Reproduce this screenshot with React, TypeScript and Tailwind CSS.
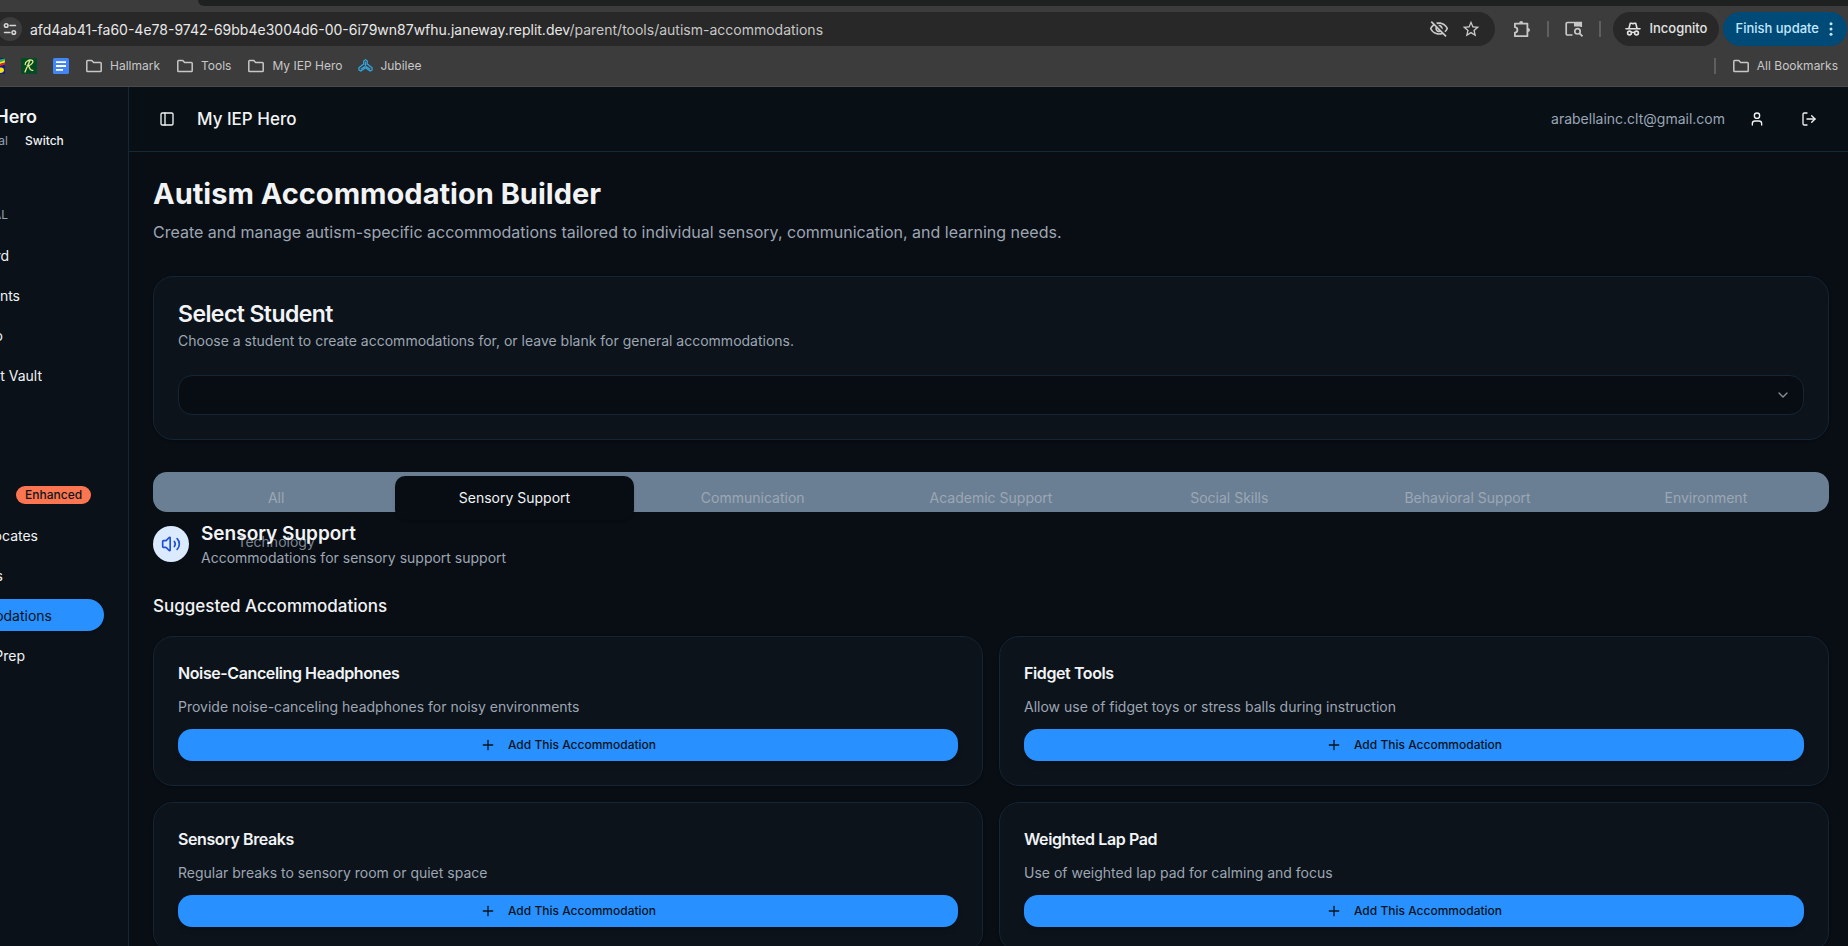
import type { ReactNode } from "react";
import { ChevronDown, LogOut, PanelLeft, Plus, User, Volume2 } from "lucide-react";
import { MdOutlineVisibilityOff, MdStarBorder } from "react-icons/md";

const categories = [
  "All",
  "Sensory Support",
  "Communication",
  "Academic Support",
  "Social Skills",
  "Behavioral Support",
  "Environment",
  "Technology",
];

const suggestions = [
  { title: "Noise-Canceling Headphones", text: "Provide noise-canceling headphones for noisy environments" },
  { title: "Fidget Tools", text: "Allow use of fidget toys or stress balls during instruction" },
  { title: "Sensory Breaks", text: "Regular breaks to sensory room or quiet space" },
  { title: "Weighted Lap Pad", text: "Use of weighted lap pad for calming and focus" },
];

function SiteInfoIcon() {
  return (
    <svg width="14" height="14" viewBox="0 0 14 14" fill="none" stroke="#d6d6d6" strokeWidth="1.5">
      <circle cx="3.2" cy="3.5" r="1.8" />
      <path d="M7 3.5h5.5M1.5 10.5H7" strokeLinecap="round" />
      <circle cx="10.8" cy="10.5" r="1.8" />
    </svg>
  );
}

function FolderIcon() {
  return (
    <svg width="18" height="16" viewBox="0 0 18 16" fill="none" stroke="#c7c7c7" strokeWidth="1.5" strokeLinejoin="round">
      <path d="M1.8 3.4a.8.8 0 0 1 .8-.8H6.800L8.600 4.500H15.400a.8.8 0 0 1 .8.8V12.800a.8.8 0 0 1-.8.8H2.600a.8.8 0 0 1-.8-.8z" />
    </svg>
  );
}

function ExtensionIcon() {
  return (
    <svg width="18" height="18" viewBox="0 0 18 18" fill="none">
      <path
        d="M1.900 3.600H14.400V16.200H1.900V12.600C3.400 12.400 4.400 11.300 4.400 9.900C4.400 8.500 3.400 7.400 1.900 7.200Z"
        stroke="#c7c7c7"
        strokeWidth="1.8"
        strokeLinejoin="round"
      />
      <path d="M6.200 3.200a2 2.200 0 0 1 4 0zM14.800 7.900a2.200 2 0 0 1 0 4z" fill="#c7c7c7" />
    </svg>
  );
}

function TabSearchIcon() {
  return (
    <svg width="18" height="16" viewBox="0 0 18 16" fill="none" stroke="#c7c7c7" strokeWidth="1.700">
      <path d="M7.500 14H2.500a1.300 1.300 0 0 1-1.300-1.300V2.800a1.300 1.300 0 0 1 1.300-1.300H16.200V6" />
      <path d="M9 1h7.800v4.500H9z" fill="#c7c7c7" stroke="none" />
      <circle cx="12.500" cy="10.300" r="2.700" />
      <path d="M14.500 12.300l3 3" />
    </svg>
  );
}

function IncognitoIcon() {
  return (
    <svg width="16" height="16" viewBox="0 0 16 16" fill="none" stroke="#e3e3e3" strokeWidth="1.600">
      <path d="M1 7.800h14" strokeLinecap="round" />
      <path d="M4 7.300L5.300 2.200H6.600L8 2.800L9.400 2.200H10.700L12 7.300" strokeLinejoin="round" />
      <circle cx="4.500" cy="12" r="1.900" />
      <circle cx="11.500" cy="12" r="1.900" />
      <path d="M6.400 11.600q1.600-.8 3.200 0" />
    </svg>
  );
}

function RainbowIcon() {
  return (
    <svg width="5" height="16" viewBox="0 0 5 16">
      <path fill="#171b8c" d="M0 0h5v16H0z" />
      <path fill="#2bb24c" d="M0 1.500L5 .5V3L0 4z" />
      <path fill="#f6e51d" d="M0 4L5 2.600V4.500L0 6z" />
      <path fill="#e3281f" d="M0 6L5 4.500V6.500L0 8z" />
      <path fill="#f4e40c" d="M0 9.500Q4 9 4 12T0 15z" />
    </svg>
  );
}

function ScriptRIcon() {
  return (
    <svg width="16" height="16" viewBox="0 0 16 16" fill="none">
      <path fill="#064a25" d="M0 0h16v16H0z" />
      <path
        d="M4.200 6.500C4 3.500 8 1.600 10.700 2.100C13.300 2.700 11.500 6.800 7.200 7.800C9 8.500 8.400 13.500 11.800 12.300M8.800 2.800C7.500 6 5.500 10 4 14"
        stroke="#dff08a"
        strokeWidth="1.300"
        strokeLinecap="round"
      />
    </svg>
  );
}

function DocsIcon() {
  return (
    <svg width="16" height="16" viewBox="0 0 16 16">
      <rect width="16" height="16" rx="1.500" fill="#4285f4" />
      <path d="M3 3.200h10v1.800H3zM3 7.100h10v1.800H3zM3 11h7v1.800H3z" fill="#fff" />
    </svg>
  );
}

function JubileeIcon() {
  return (
    <svg width="15" height="16" viewBox="0 0 16 16" fill="none" stroke="#35a7e0" strokeWidth="1.300" strokeLinejoin="round">
      <path d="M6.100 6.800V2.600L8 1.200L9.900 2.600V6.800M8 3.500V8.600" />
      <path d="M5.600 6.200L1 9.800V12.200L3 13.400L7.400 10.400V8.800M3 11.400L7.400 8.600" />
      <path d="M10.400 6.200L15 9.800V12.200L13 13.400L8.600 10.400V8.800M13 11.400L8.600 8.600" />
    </svg>
  );
}

function Bookmark({ icon, children }: { icon: ReactNode; children?: ReactNode }) {
  return (
    <a href="#" className="flex shrink-0 items-center gap-[7px]">
      {icon}
      {children}
    </a>
  );
}

function BrowserChrome() {
  return (
    <div className="shrink-0 border-b border-[#4a4a4a] bg-[#3c3c3c] text-[#c7c7c7]">
      <div className="flex h-1.5">
        <div className="ml-[198px] grow rounded-bl-lg bg-[#1f2120]" />
      </div>
      <div className="flex h-[46px] items-center pr-px">
        <div className="flex h-[34px] grow items-center rounded-r-full bg-[#282828] pr-[14px]">
          <button aria-label="View site information" className="-ml-[2px] flex size-6 items-center justify-center rounded-full bg-[#3c3c3c]">
            <SiteInfoIcon />
          </button>
          <span className="ml-2 grow text-[14px] text-[#e8e8e8]">
            afd4ab41-fa60-4e78-9742-69bb4e3004d6-00-6i79wn87wfhu.janeway.replit.dev
            <span className="text-[#c7c7c7]">/parent/tools/autism-accommodations</span>
          </span>
          <button aria-label="Third-party cookies blocked" className="mr-3">
            <MdOutlineVisibilityOff size={20} />
          </button>
          <button aria-label="Bookmark this tab">
            <MdStarBorder size={20} />
          </button>
        </div>
        <button aria-label="Extensions" className="ml-[18px]">
          <ExtensionIcon />
        </button>
        <div className="ml-4 h-4 w-0.5 bg-[#5f5f5f]" />
        <button aria-label="Search tabs" className="ml-4">
          <TabSearchIcon />
        </button>
        <div className="ml-4 h-4 w-0.5 bg-[#5f5f5f]" />
        <div className="ml-3 flex h-[34px] items-center gap-2 rounded-full bg-[#282828] px-3 text-[13px] font-medium text-[#e3e3e3]">
          <IncognitoIcon />
          Incognito
        </div>
        <button className="ml-1 flex h-[34px] items-center gap-2 rounded-full bg-[#004a77] px-3 text-[13px] font-medium text-[#c2e7ff]">
          Finish update
          <svg width="8" height="16" viewBox="0 0 8 16" fill="#c2e7ff">
            <circle cx="4" cy="2.700" r="1.500" />
            <circle cx="4" cy="8" r="1.500" />
            <circle cx="4" cy="13.300" r="1.500" />
          </svg>
        </button>
      </div>
      <div className="flex h-[34px] items-start gap-4 pt-1.5 pr-2.5 text-[12px] leading-4">
        <Bookmark icon={<RainbowIcon />} />
        <Bookmark icon={<ScriptRIcon />} />
        <Bookmark icon={<DocsIcon />} />
        <Bookmark icon={<FolderIcon />}>Hallmark</Bookmark>
        <Bookmark icon={<FolderIcon />}>Tools</Bookmark>
        <Bookmark icon={<FolderIcon />}>My IEP Hero</Bookmark>
        <Bookmark icon={<JubileeIcon />}>Jubilee</Bookmark>
        <div className="ml-auto h-4 w-0.5 bg-[#5f5f5f]" />
        <Bookmark icon={<FolderIcon />}>All Bookmarks</Bookmark>
      </div>
    </div>
  );
}

/* The scrolled sidebar shows only the tail of each label, so rows align to their right end. */
function NavItem({ width, children }: { width: string; children: ReactNode }) {
  return (
    <a href="#" className={`${width} flex h-8 items-center justify-end overflow-hidden whitespace-nowrap`}>
      {children}
    </a>
  );
}

function Sidebar() {
  return (
    <aside className="w-[129px] shrink-0 overflow-hidden border-r border-[#16263a] bg-[#0a1118] text-[14px] text-[#f1f3f5]">
      <div className="flex w-[37px] justify-end overflow-hidden pt-4 text-[18px] leading-7 font-semibold">Hero</div>
      <div className="flex gap-[17px] pt-0.5 text-[12px] leading-4">
        <span className="flex w-2 justify-end text-[#94a0b0]">al</span>
        <button className="font-medium">Switch</button>
      </div>
      <div className="mt-[50px] flex h-8 w-2 items-center justify-end text-[12px] text-[#94a0b0]">AL</div>
      <nav className="mt-2 flex flex-col gap-2">
        <NavItem width="w-[9px]">rd</NavItem>
        <NavItem width="w-5">nts</NavItem>
        <NavItem width="w-[3px]">o</NavItem>
        <NavItem width="w-[42px]">t Vault</NavItem>
      </nav>
      <nav className="mt-[88px] flex flex-col gap-2">
        <div className="flex h-8 items-center pl-4">
          <span className="rounded-full bg-[#fb7650] px-[9px] text-[12px] leading-[18px] font-medium text-[#10151c]">Enhanced</span>
        </div>
        <NavItem width="w-[38px]">ocates</NavItem>
        <NavItem width="w-[3px]">s</NavItem>
        <a href="#" aria-current="page" className="flex h-8 w-[104px] items-center rounded-r-full bg-[#2890ff] text-[#0a1420] shadow">
          <span className="flex w-[52px] justify-end">odations</span>
        </a>
        <NavItem width="w-[25px]">Prep</NavItem>
      </nav>
    </aside>
  );
}

function Header() {
  return (
    <header className="flex h-[65px] shrink-0 items-center border-b border-[#152835] bg-[#080f15] pr-[31px] pl-[30px] text-[#f1f3f5]">
      <button aria-label="Toggle sidebar">
        <PanelLeft size={16} />
      </button>
      <span className="ml-[22px] text-[17px] leading-6 font-medium">My IEP Hero</span>
      <span className="ml-auto text-[14px] leading-5 text-[#9aa6b6]">arabellainc.clt@gmail.com</span>
      <button aria-label="Profile" className="ml-6">
        <User size={16} />
      </button>
      <button aria-label="Log out" className="ml-9">
        <LogOut size={16} />
      </button>
    </header>
  );
}

function StudentCard() {
  return (
    <section className="mt-8 rounded-[20px] border border-[#152533] bg-[#0c131b] p-6 shadow">
      <h2 className="text-[23px] leading-[26px] font-semibold tracking-tight">Select Student</h2>
      <label htmlFor="student" className="mt-1 block text-[14px] leading-5 text-[#9da6b2]">
        Choose a student to create accommodations for, or leave blank for general accommodations.
      </label>
      <div className="mt-6 grid items-center">
        <select
          id="student"
          className="col-start-1 row-start-1 h-10 w-full appearance-none rounded-[14px] border border-[#152533] bg-[#080d13] px-3 text-[14px]"
        />
        <ChevronDown size={16} className="pointer-events-none col-start-1 row-start-1 mr-[13px] justify-self-end text-[#8b8f95]" />
      </div>
    </section>
  );
}

function CategoryTabs() {
  return (
    <div role="tablist" className="mt-8 grid h-10 auto-rows-[44px] grid-cols-7 rounded-[14px] bg-[#6b7f94] p-1 text-[14px] leading-5 text-[#9ba7b4]">
      {categories.map((name) =>
        name === "Sensory Support" ? (
          <button key={name} role="tab" aria-selected="true" className="rounded-[10px] bg-[#080d13] text-[#f1f3f5] shadow-sm">
            {name}
          </button>
        ) : (
          <button key={name} role="tab" aria-selected="false" className={name === "Technology" ? "text-[#7d8794]" : ""}>
            {name}
          </button>
        ),
      )}
    </div>
  );
}

function SuggestionCard({ title, text }: { title: string; text: string }) {
  return (
    <article className="rounded-[20px] border border-[#152533] bg-[#0c131b] p-6 shadow">
      <h4 className="text-[16px] leading-6 font-semibold tracking-tight">{title}</h4>
      <p className="mt-3 text-[14px] leading-5 text-[#9da6b2]">{text}</p>
      <button className="mt-3 flex h-8 w-full items-center justify-center gap-3 rounded-[14px] bg-[#2890ff] text-[12px] font-medium text-[#0a1420] shadow-md">
        <Plus size={16} />
        Add This Accommodation
      </button>
    </article>
  );
}

export default function App() {
  return (
    <div className="flex h-screen flex-col overflow-hidden bg-[#090d14] font-['Inter','Liberation_Sans',sans-serif]">
      <BrowserChrome />
      <div className="flex min-h-0 grow">
        <Sidebar />
        <div className="flex min-w-0 grow flex-col">
          <Header />
          <main className="min-h-0 grow overflow-hidden pt-6 pr-[19px] pl-6 text-[#f1f3f5]">
            <h1 className="text-[29px] leading-9 font-bold">Autism Accommodation Builder</h1>
            <p className="mt-2 text-[16px] leading-6 text-[#9da6b2]">
              Create and manage autism-specific accommodations tailored to individual sensory, communication, and learning needs.
            </p>
            <StudentCard />
            <CategoryTabs />
            <div className="mt-2 flex items-center gap-3">
              <div className="flex size-9 items-center justify-center rounded-full bg-[#dbeafe] text-[#1d4ed8]">
                <Volume2 size={20} />
              </div>
              <div>
                <h2 className="text-[19px] leading-7 font-semibold">Sensory Support</h2>
                <p className="text-[14px] leading-5 text-[#9da6b2]">Accommodations for sensory support support</p>
              </div>
            </div>
            <h3 className="mt-6 text-[17px] leading-7 font-medium">Suggested Accommodations</h3>
            <div className="mt-4 grid grid-cols-2 gap-4">
              {suggestions.map((item) => (
                <SuggestionCard key={item.title} title={item.title} text={item.text} />
              ))}
            </div>
          </main>
        </div>
      </div>
    </div>
  );
}
